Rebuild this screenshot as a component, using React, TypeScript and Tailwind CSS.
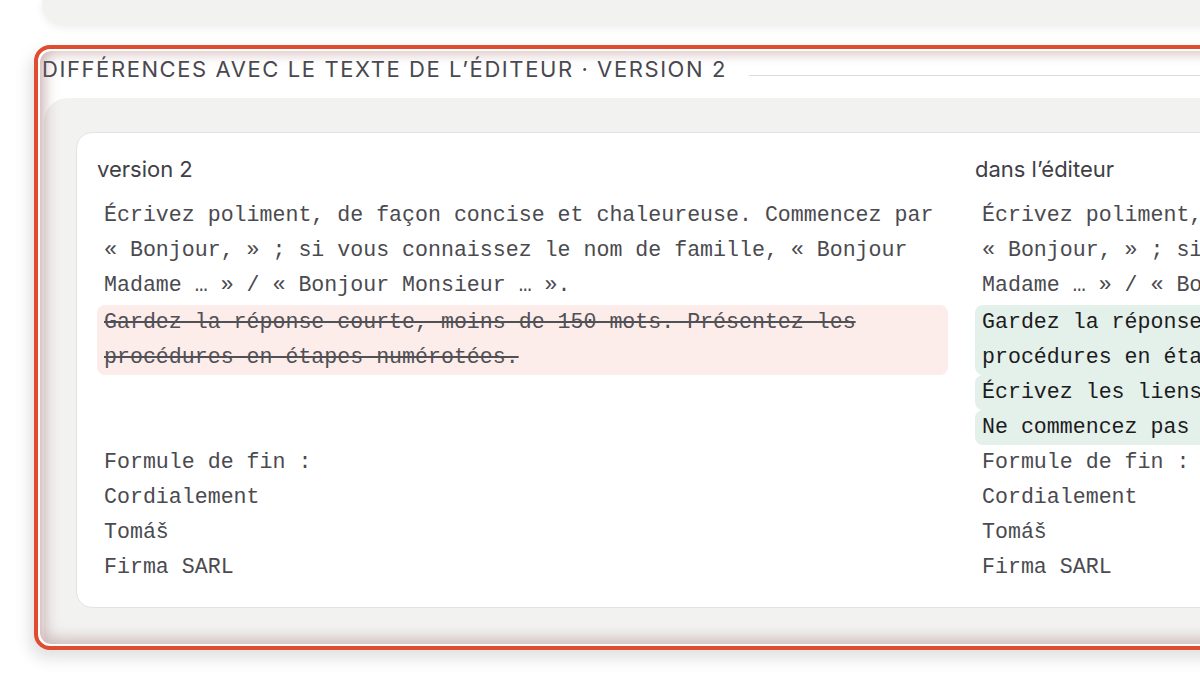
import React from "react";

const mono = { fontFamily: '"Liberation Mono", "DejaVu Sans Mono", monospace' };

function Line({ children, className = "" }: { children?: React.ReactNode; className?: string }) {
  return (
    <div className={"h-[35px] leading-[35px] px-[7px] whitespace-pre " + className}>{children}</div>
  );
}

export default function App() {
  const common1 = [
    "Écrivez poliment, de façon concise et chaleureuse. Commencez par",
    "« Bonjour, » ; si vous connaissez le nom de famille, « Bonjour",
    "Madame … » / « Bonjour Monsieur … ».",
  ];
  const common2 = ["Formule de fin :", "Cordialement", "Tomáš", "Firma SARL"];
  return (
    <div
      className="w-[1200px] h-[694px] overflow-hidden bg-white"
      style={{ fontFamily: 'Inter, "Noto Sans", sans-serif' }}
    >
      <div className="ml-[42px] h-[26px] w-[1200px] rounded-bl-[22px] bg-[#f2f2f1] shadow-[0_2px_10px_rgba(0,0,0,0.07)]" />
      <div className="mt-[19px] ml-[34px] w-[1220px] h-[605px] rounded-[16px] border-4 border-[#e14b2f] bg-white p-[2px] shadow-[-4px_8px_16px_rgba(0,0,0,0.13)]">
        <div className="relative h-full rounded-[11px] overflow-hidden flex flex-col">
          <div className="flex items-start pt-[4px] pl-[2px]">
            <div className="text-[22px] leading-[28px] tracking-[0.072em] uppercase text-[#48484f] whitespace-nowrap">
              Différences avec le texte de l’éditeur · version 2
            </div>
            <div className="flex-1 h-px bg-[#dcdcdc] mt-[20px] ml-[22px]" />
          </div>
          <div className="ml-[4px] mt-[15px] flex-1 rounded-tl-[24px] bg-[#f2f2f1] pl-[32px] pt-[34px]">
            <div className="rounded-[16px] border border-[#e2e2e2] bg-white pl-[20px] pt-[22px] pb-[22px] flex gap-[27px] text-[21.6px]">
              <div className="w-[851px] shrink-0">
                <div className="text-[22px] leading-[28px] mb-[15px] text-[#404046]">version 2</div>
                <div style={mono} className="text-[#4a4a4f]">
                  {common1.map((l) => (
                    <Line key={l}>{l}</Line>
                  ))}
                  <div className="mt-[2px] rounded-[8px] bg-[#fcecea] text-[#505055] line-through">
                    <Line>Gardez la réponse courte, moins de 150 mots. Présentez les</Line>
                    <Line>procédures en étapes numérotées.</Line>
                  </div>
                  <Line />
                  <Line />
                  {common2.map((l) => (
                    <Line key={l}>{l}</Line>
                  ))}
                </div>
              </div>
              <div className="w-[851px] shrink-0">
                <div className="text-[22px] leading-[28px] mb-[15px] text-[#404046]">dans l’éditeur</div>
                <div style={mono} className="text-[#4a4a4f]">
                  {common1.map((l) => (
                    <Line key={l}>{l}</Line>
                  ))}
                  <div className="mt-[2px] rounded-[8px] bg-[#e4f0ea] text-[#1c1c1e]">
                    <Line>Gardez la réponse courte, moins de 120 mots. Présentez les</Line>
                    <Line>procédures en étapes numérotées.</Line>
                  </div>
                  <div className="rounded-[8px] bg-[#e4f0ea] text-[#1c1c1e]">
                    <Line>Écrivez les liens en entier.</Line>
                  </div>
                  <div className="rounded-[8px] bg-[#e4f0ea] text-[#1c1c1e]">
                    <Line>Ne commencez pas par « Cher client ».</Line>
                  </div>
                  {common2.map((l) => (
                    <Line key={l}>{l}</Line>
                  ))}
                </div>
              </div>
            </div>
          </div>
          <div className="pointer-events-none absolute inset-0 rounded-[11px] shadow-[inset_6px_-6px_14px_rgba(150,100,100,0.35),inset_0_6px_10px_rgba(170,110,110,0.25)]" />
        </div>
      </div>
    </div>
  );
}
